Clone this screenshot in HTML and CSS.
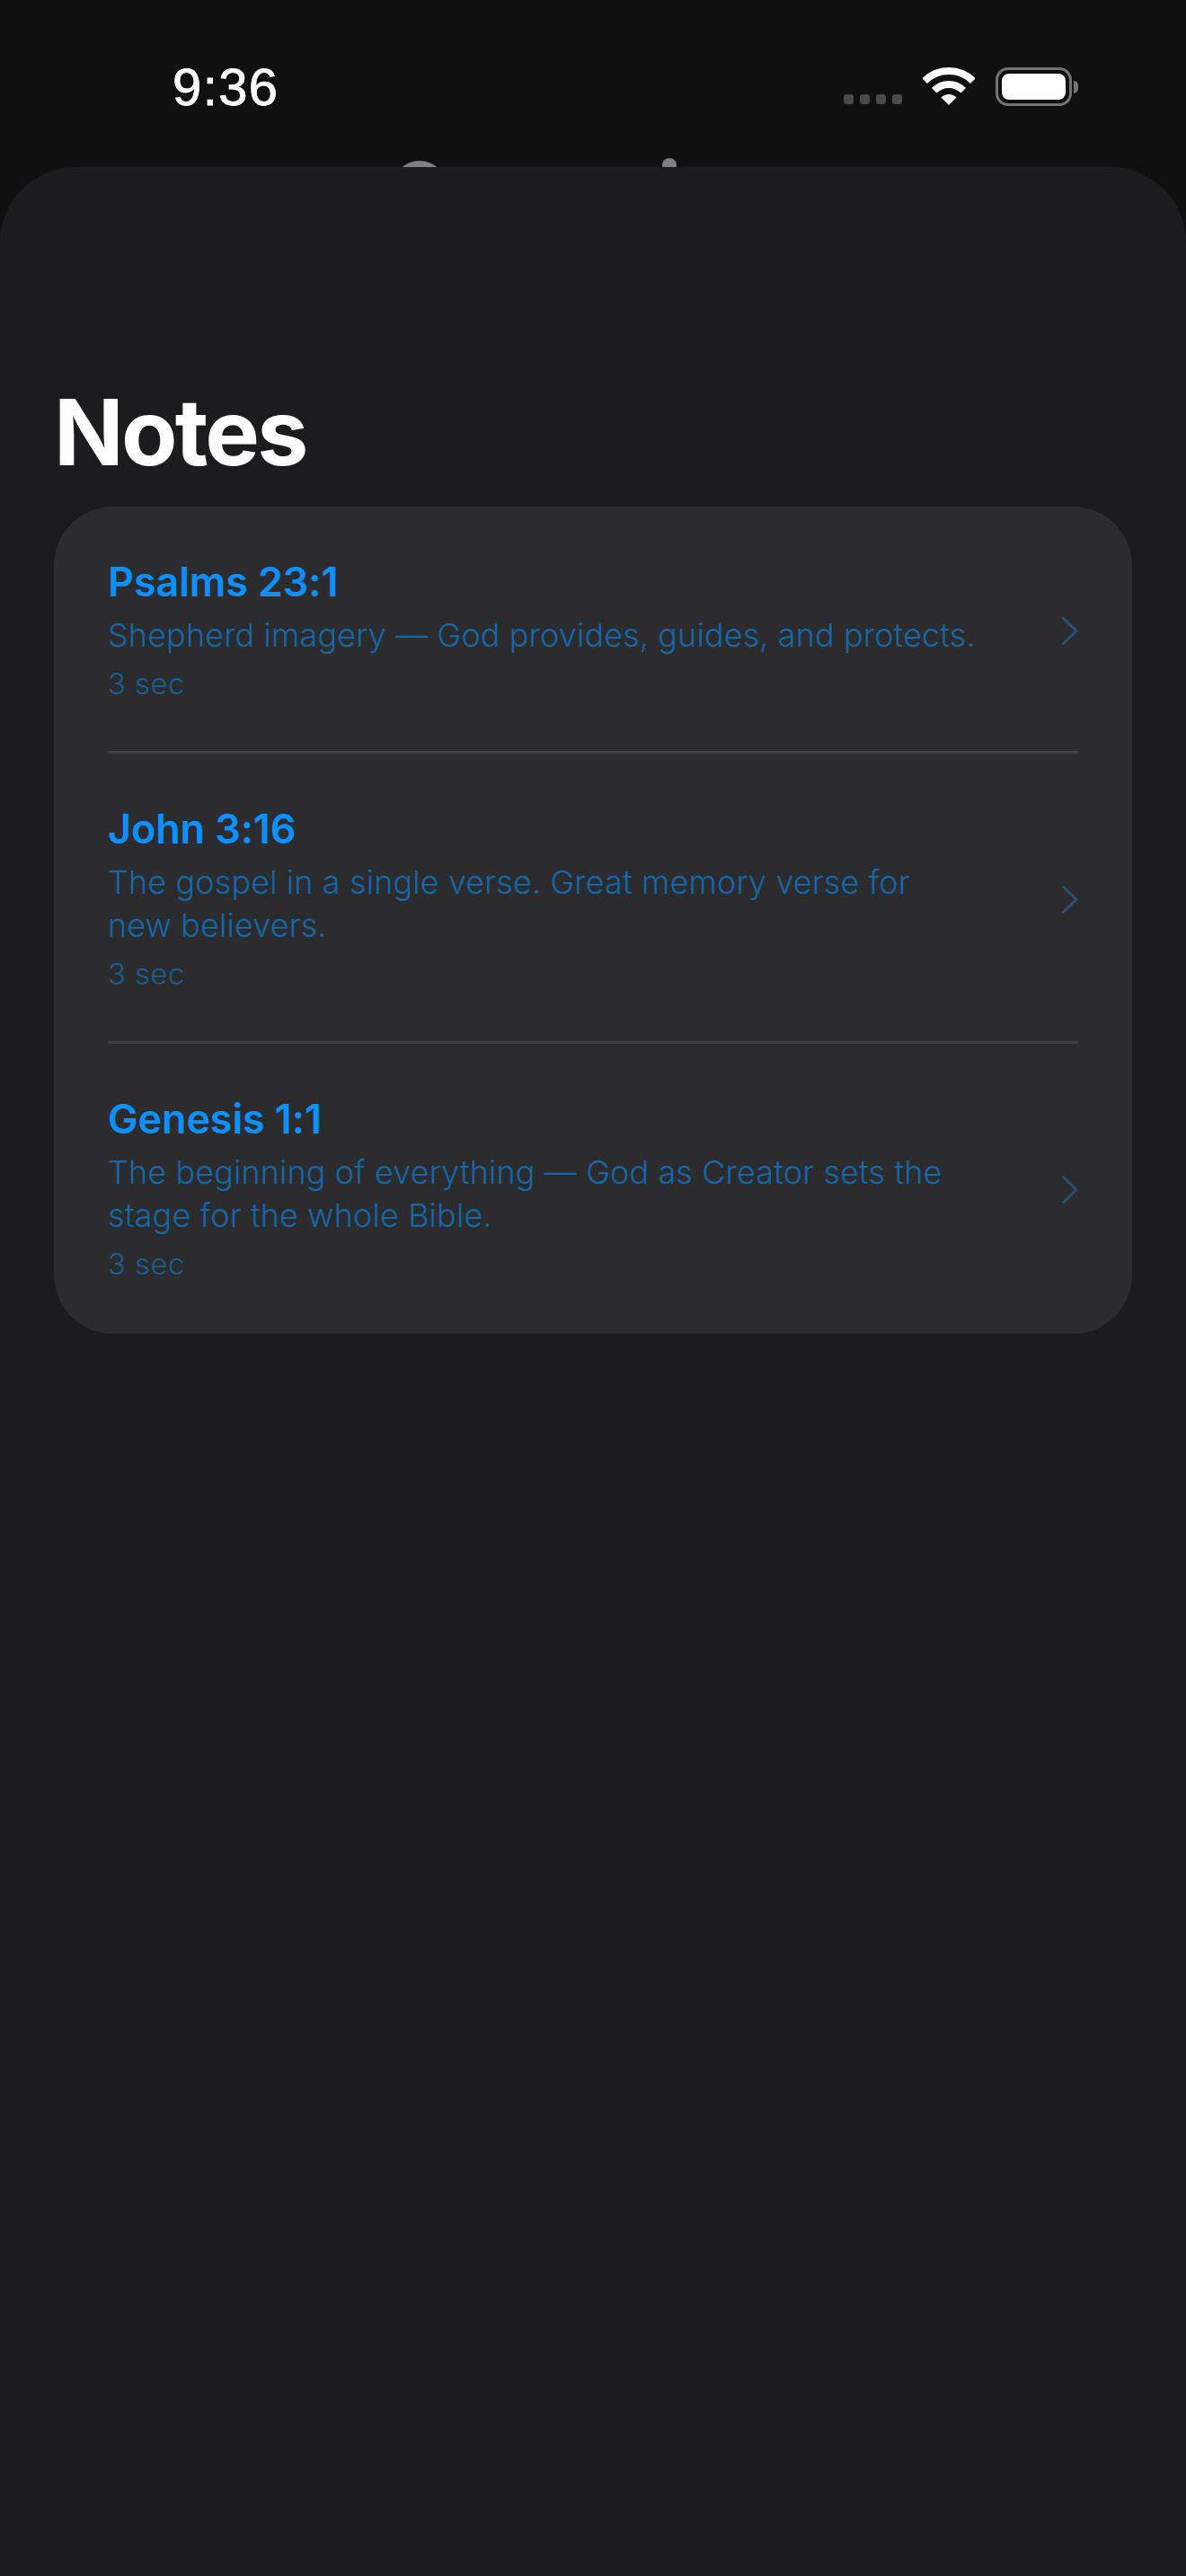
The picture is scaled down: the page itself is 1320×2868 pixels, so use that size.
FILE: index.html
```html
<!DOCTYPE html>
<html lang="en">

<head>
    <meta charset="UTF-8">
    <meta name="viewport" content="width=device-width, initial-scale=1.0">
    <title>Notes</title>
    <link rel="stylesheet" href="styles.css">
</head>

<body>
    <div class="status-bar">
        <span class="time">9:36</span>
        <div class="status-icons">
            <div class="signal">
                <span class="signal-dot"></span>
                <span class="signal-dot"></span>
                <span class="signal-dot"></span>
                <span class="signal-dot"></span>
            </div>
            <svg class="wifi" viewBox="0 0 58 42" width="58" height="42">
                <path d="M2.13 15.13A38 38 0 0 1 55.87 15.13" fill="none" stroke="#fff" stroke-width="8" />
                <path d="M12.74 25.74A23 23 0 0 1 45.26 25.74" fill="none" stroke="#fff" stroke-width="8" />
                <path d="M29 42L20.51 33.51A12 12 0 0 1 37.49 33.51Z" fill="#fff" />
            </svg>
            <div class="battery">
                <div class="battery-body">
                    <div class="battery-level"></div>
                </div>
                <div class="battery-nub"></div>
            </div>
        </div>
    </div>

    <!-- tops of the big heading on the screen behind the sheet -->
    <div class="behind">
        <span class="behind-round"></span>
        <span class="behind-dot"></span>
    </div>

    <main class="sheet">
        <h1 class="heading">Notes</h1>
        <div class="card">
            <div class="row">
                <div class="row-text">
                    <div class="row-title">Psalms 23:1</div>
                    <div class="row-note">Shepherd imagery — God provides, guides, and protects.</div>
                    <div class="row-time">3 sec</div>
                </div>
                <svg class="chevron" viewBox="0 0 18 31" width="18" height="31">
                    <path d="M1.5 1.5L16 15.5L1.5 29.5" fill="none" stroke="#27507a" stroke-width="3" stroke-linecap="round" stroke-linejoin="round" />
                </svg>
            </div>
            <div class="divider"></div>
            <div class="row">
                <div class="row-text">
                    <div class="row-title">John 3:16</div>
                    <div class="row-note">The gospel in a single verse. Great memory verse for new believers.</div>
                    <div class="row-time">3 sec</div>
                </div>
                <svg class="chevron" viewBox="0 0 18 31" width="18" height="31">
                    <path d="M1.5 1.5L16 15.5L1.5 29.5" fill="none" stroke="#27507a" stroke-width="3" stroke-linecap="round" stroke-linejoin="round" />
                </svg>
            </div>
            <div class="divider"></div>
            <div class="row">
                <div class="row-text">
                    <div class="row-title">Genesis 1:1</div>
                    <div class="row-note">The beginning of everything — God as Creator sets the stage for the whole Bible.</div>
                    <div class="row-time">3 sec</div>
                </div>
                <svg class="chevron" viewBox="0 0 18 31" width="18" height="31">
                    <path d="M1.5 1.5L16 15.5L1.5 29.5" fill="none" stroke="#27507a" stroke-width="3" stroke-linecap="round" stroke-linejoin="round" />
                </svg>
            </div>
        </div>
    </main>
</body>

</html>
```

FILE: styles.css
```css
* {
    box-sizing: border-box;
}

body {
    margin: 0;
    width: 1320px;
    height: 2868px;
    overflow: hidden;
    display: flex;
    flex-direction: column;
    position: relative;
    font-family: Inter, "Liberation Sans", sans-serif;
    background-color: #101010;
}

.status-bar {
    height: 186px;
    display: flex;
    justify-content: space-between;
    padding: 68px 120px 0 192px;
}

.time {
    font-family: "Liberation Sans", Arial, sans-serif;
    font-size: 58px;
    line-height: 58px;
    height: 58px;
    letter-spacing: 1.4px;
    color: #fff;
    -webkit-text-stroke: 0.8px #fff;
}

.status-icons {
    display: flex;
    align-items: flex-start;
    padding-top: 7px;
}

.signal {
    display: flex;
    gap: 7px;
    margin-top: 30px;
    margin-right: 23px;
}

.signal-dot {
    width: 11px;
    height: 11px;
    border-radius: 3px;
    background: #4a4a4a;
}

.wifi {
    margin-right: 23px;
}

.battery {
    display: flex;
    align-items: center;
}

.battery-body {
    width: 85px;
    height: 43px;
    padding: 4px;
    border: 3px solid #737373;
    border-radius: 14px;
}

.battery-level {
    height: 100%;
    border-radius: 8px;
    background: #fff;
}

.battery-nub {
    width: 5px;
    height: 14px;
    margin-left: 2px;
    border-radius: 0 7px 7px 0;
    background: #737373;
}

.behind-round {
    position: absolute;
    left: 437px;
    top: 179px;
    width: 60px;
    height: 60px;
    border-radius: 50%;
    background: #808080;
}

.behind-dot {
    position: absolute;
    left: 737px;
    top: 176px;
    width: 16px;
    height: 16px;
    border-radius: 50%;
    background: #808080;
}

.sheet {
    flex: 1;
    position: relative;
    background-color: #1c1c1e;
    border-radius: 84px 84px 0 0;
    padding: 233px 60px 0;
}

.heading {
    margin: 0 0 21px;
    font-size: 102px;
    line-height: 124px;
    font-weight: 700;
    letter-spacing: -2.8px;
    color: #fff;
}

.card {
    background-color: #2c2c2e;
    border-radius: 66px;
    padding: 0 60px 3px;
}

.row {
    display: flex;
    align-items: center;
    justify-content: space-between;
    padding: 57px 0 53px;
}

.row-text {
    width: 974px;
}

.row-title {
    font-size: 45px;
    line-height: 54px;
    font-weight: 600;
    letter-spacing: -0.15px;
    color: #0a90ff;
}

.row-note {
    margin-top: 8px;
    font-size: 36px;
    line-height: 48px;
    font-weight: 350;
    letter-spacing: 0.1px;
    color: #1467a8;
}

.row-time {
    margin-top: 8px;
    font-size: 33px;
    line-height: 44px;
    font-weight: 350;
    letter-spacing: 0.4px;
    color: #175e96;
}

.chevron {
    flex-shrink: 0;
}

.divider {
    height: 3px;
    background-color: #3f3f41;
}
```
